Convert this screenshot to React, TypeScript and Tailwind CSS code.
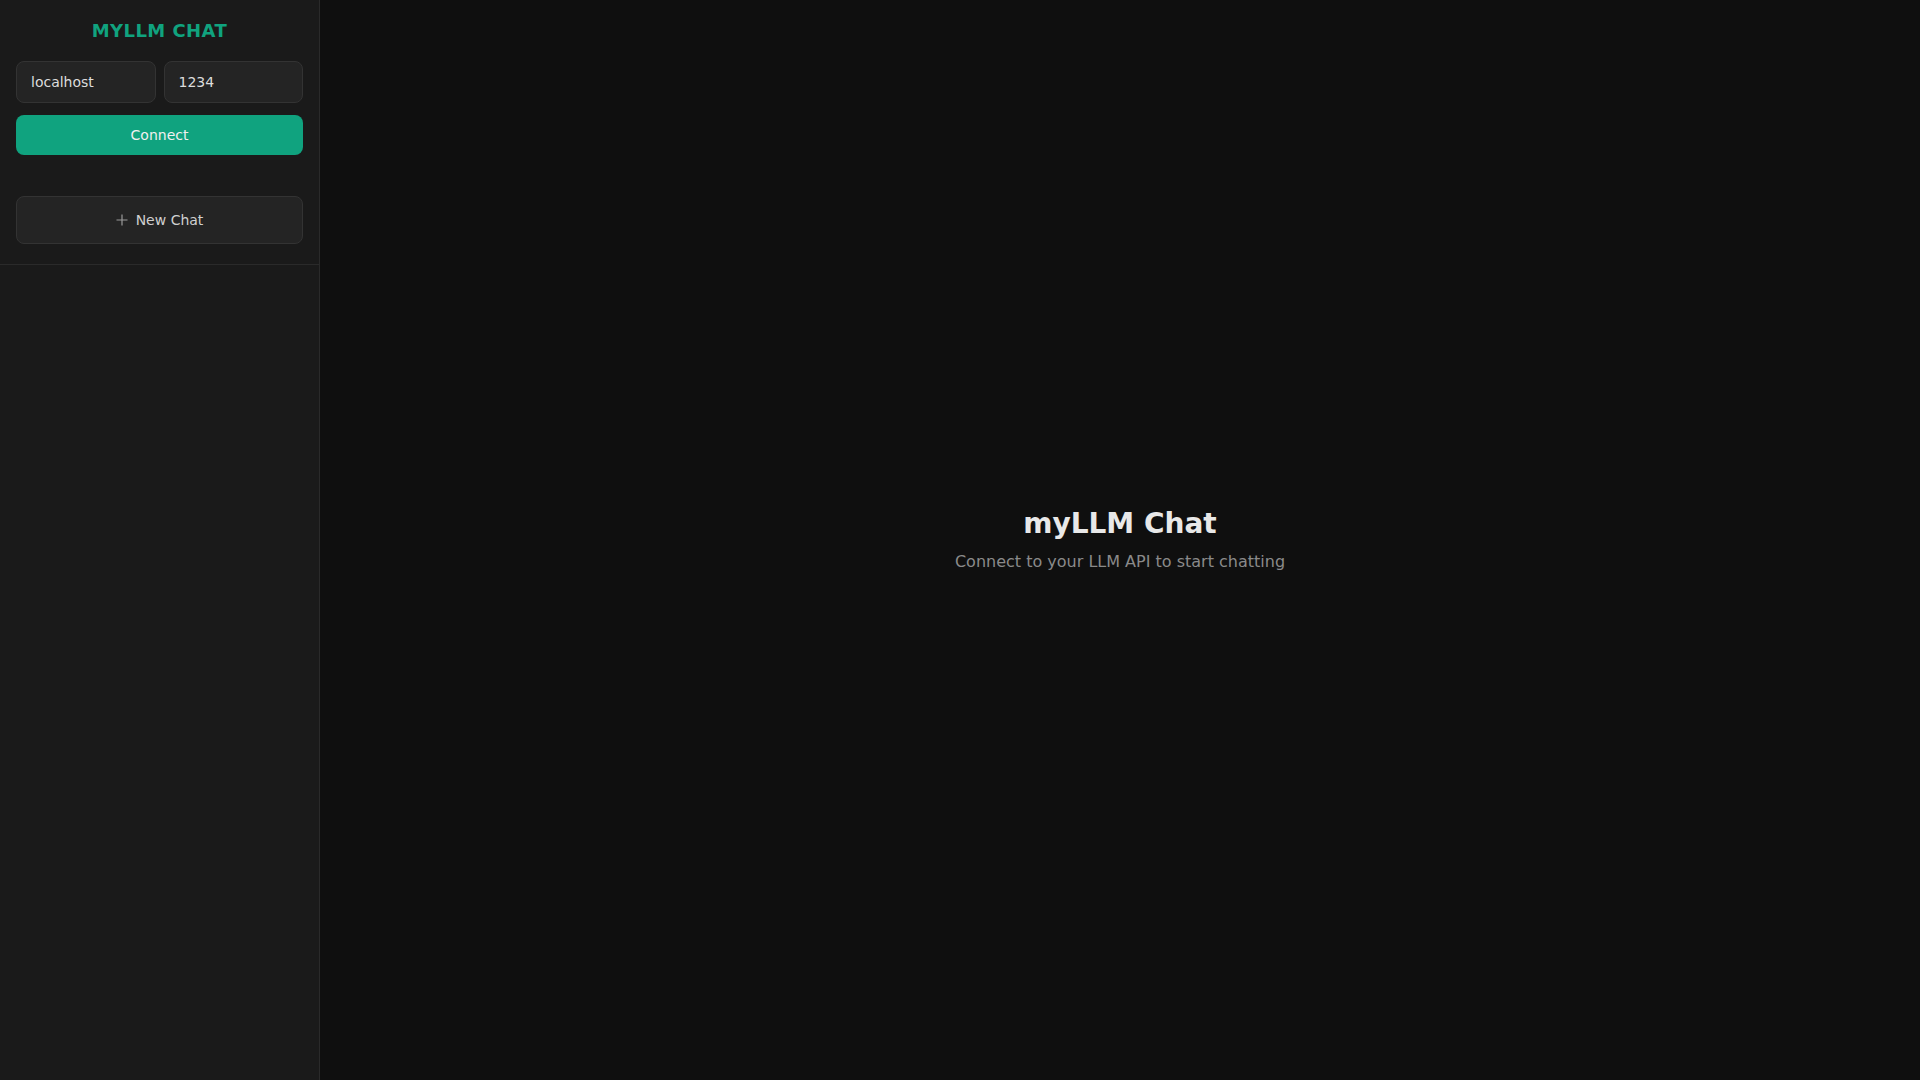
import React from "react";

export default function App() {
  return (
    <div className="flex h-screen w-full font-['DejaVu_Sans',sans-serif] bg-[#0f0f0f]">
      <aside className="flex w-[320px] shrink-0 flex-col border-r border-[#2a2a2a] bg-[#1a1a1a]">
        <div className="border-b border-[#2a2a2a] px-4 pt-[17px] pb-5">
          <h1 className="mb-4 text-center text-lg font-bold leading-7 tracking-wide text-[#10a37f]">
            MYLLM CHAT
          </h1>
          <div className="mb-3 flex gap-2">
            <input
              defaultValue="localhost"
              className="h-[42px] w-full min-w-0 rounded-lg border border-[#333333] bg-[#242424] px-[14px] text-sm text-[#dddddd] outline-none"
            />
            <input
              defaultValue="1234"
              className="h-[42px] w-full min-w-0 rounded-lg border border-[#333333] bg-[#242424] px-[14px] text-sm text-[#dddddd] outline-none"
            />
          </div>
          <button className="h-10 w-full rounded-lg bg-[#10a37f] text-sm text-[#f0f0f0]">
            Connect
          </button>
          <button className="mt-[41px] flex h-12 w-full items-center justify-center gap-2 rounded-lg border border-[#333333] bg-[#242424] text-sm text-[#d0d0d0]">
            <svg width="12" height="12" viewBox="0 0 12 12" className="text-[#9a9a9a]">
              <path d="M6 0.5V11.5M0.5 6H11.5" stroke="currentColor" strokeWidth="1.2" />
            </svg>
            <span>New Chat</span>
          </button>
        </div>
        <div className="flex-1" />
      </aside>
      <main className="flex flex-1 flex-col items-center justify-center">
        <h2 className="text-[28px] font-bold leading-9 text-[#e8e8e8]">myLLM Chat</h2>
        <p className="mt-2 text-base text-[#8a8a8a]">Connect to your LLM API to start chatting</p>
      </main>
    </div>
  );
}
